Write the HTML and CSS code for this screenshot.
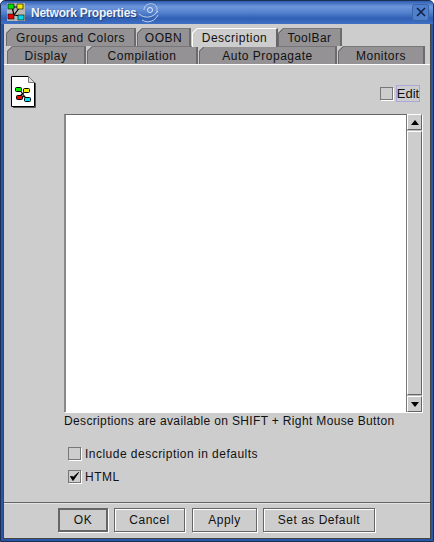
FILE: index.html
```html
<!DOCTYPE html>
<html lang="en">
<head>
<meta charset="utf-8">
<title>Network Properties</title>
<link rel="stylesheet" href="styles.css">
</head>
<body>
<div class="window">
  <header class="titlebar">
    <svg class="app-icon" width="18" height="18" viewBox="0 0 18 18">
      <rect width="18" height="18" fill="#b9b9b4"/>
      <path d="M5 4L13 4M5 4L7 12M13 4L7 12M7 12L13 13" stroke="#000" stroke-width="1.2" fill="none"/>
      <rect x="1" y="1" width="6" height="5" fill="#00e000" stroke="#000" stroke-width=".6"/>
      <rect x="10" y="1" width="6" height="5" fill="#f0e800" stroke="#000" stroke-width=".6"/>
      <rect x="1" y="11" width="6" height="5" fill="#e80000" stroke="#000" stroke-width=".6"/>
      <rect x="11" y="12" width="6" height="5" fill="#00d8e8" stroke="#000" stroke-width=".6"/>
    </svg>
    <span class="title">Network Properties</span>
    <svg class="swirl" width="22" height="24" viewBox="0 0 22 24">
      <g fill="none" stroke="#dfe8f6" stroke-width="1">
        <circle cx="12" cy="9" r="2.5"/>
        <path d="M6 9C6 4 11 2 15 3C19 4 20 9 18 12" opacity=".7"/>
        <path d="M1 13C7 18 15 17 20 10M4 19C10 23 17 20 20 14" opacity=".8"/>
      </g>
    </svg>
    <span class="close"><svg width="12" height="12" viewBox="0 0 12 12"><path d="M2 2L10 10M10 2L2 10" stroke="#10214a" stroke-width="1.6"/></svg></span>
  </header>
  <div class="client">
    <nav class="tabs">
      <div class="tab-row row-top">
        <div class="tab t-groups">Groups and Colors</div>
        <div class="tab t-oobn">OOBN</div>
        <div class="tab active t-desc">Description</div>
        <div class="tab t-tool">ToolBar</div>
      </div>
      <div class="tab-row row-bottom">
        <div class="tab t-display">Display</div>
        <div class="tab t-comp">Compilation</div>
        <div class="tab t-auto">Auto Propagate</div>
        <div class="tab t-mon">Monitors</div>
      </div>
    </nav>
    <main class="panel">
      <div class="panel-head">
        <svg class="doc-icon" width="25" height="32" viewBox="0 0 25 32">
          <path d="M.5.5H17.500L23.500 6.500V30.500H.5Z" fill="#fff" stroke="#000"/>
          <path d="M24.500 7V31.500H2" fill="none" stroke="#555"/>
          <path d="M17.500.5V6.500H23.500Z" fill="#ddd" stroke="#777"/>
          <path d="M8 13L14 21M17 13L9 20M10 20L17 22" stroke="#000" stroke-width="1.2"/>
          <rect x="4.500" y="11.500" width="6" height="4" rx="1" fill="#00f000" stroke="#000"/>
          <rect x="12.500" y="12.500" width="6" height="4" rx="1" fill="#f8f000" stroke="#000"/>
          <rect x="5.500" y="19.500" width="6" height="4" rx="1" fill="#f00000" stroke="#000"/>
          <rect x="13.500" y="21.500" width="6" height="4" rx="1" fill="#00e0f0" stroke="#000"/>
        </svg>
        <label class="edit"><span class="check"></span><span class="edit-label">Edit</span></label>
      </div>
      <div class="text-area">
        <div class="text-box"></div>
        <div class="scrollbar">
          <span class="arrow-btn"><span class="arrow up"></span></span>
          <span class="thumb"></span>
          <span class="arrow-btn"><span class="arrow down"></span></span>
        </div>
      </div>
      <p class="hint">Descriptions are available on SHIFT + Right Mouse Button</p>
      <div class="options">
        <label class="option"><span class="check"></span>Include description in defaults</label>
        <label class="option"><span class="check"><svg width="11" height="11" viewBox="0 0 11 11"><path d="M1.500 5.500L4 9.500L9.500 1.500L4.500 6Z" fill="#000" stroke="#000"/></svg></span>HTML</label>
      </div>
    </main>
    <footer class="buttons">
      <button class="btn btn-ok">OK</button>
      <button class="btn btn-cancel">Cancel</button>
      <button class="btn btn-apply">Apply</button>
      <button class="btn btn-default">Set as Default</button>
    </footer>
  </div>
</div>
</body>
</html>
```
FILE: styles.css
```css
* { box-sizing: border-box; }
html, body { margin: 0; padding: 0; }
body { width: 434px; height: 542px; overflow: hidden; background: #fff; font-family: "Liberation Sans", sans-serif; font-size: 12px; color: #111; }
.window { width: 434px; height: 542px; display: flex; flex-direction: column; background: #2a56a8; border: 1px solid #1b2f55; border-radius: 5px 5px 0 0; padding: 0 2px 2px 2px; }
.titlebar { flex: none; height: 23px; margin: 0 -2px; padding: 0 3px 0 6px; display: flex; align-items: center; background: linear-gradient(#2f5cb0 0, #6d97dc 25%, #4e7cca 55%, #305fb4 75%, #3f70c4 100%); color: #fff; border-radius: 4px 4px 0 0; }
.app-icon { flex: none; margin-top: -1px; }
.title { margin-left: 6px; font-weight: bold; font-size: 12px; letter-spacing: -.25px; text-shadow: 1px 1px 1px #1c3a78; color: #eef3fb; }
.swirl { margin-left: 1px; margin-top: 1px; }
.close { margin-left: auto; margin-right: 1px; width: 17px; height: 17px; margin-top: -1px; display: flex; align-items: center; justify-content: center; background: #5080cc; border: 1px solid #3b65aa; border-radius: 3px; }
.client { flex: 1; display: flex; flex-direction: column; min-height: 0; background: #cdcdcd; border: 1px solid #444; border-top: 0; }
.tabs { flex: none; padding: 4px 0 0 2px; height: 40px; display: flex; flex-direction: column; }
.tab-row { display: flex; height: 18px; }
.row-bottom { padding-left: 1px; }
.tab { height: 18px; display: flex; align-items: center; justify-content: center; background: linear-gradient(135deg, transparent 3.5px, #666 3.5px, #666 4.5px, #949295 4.5px) border-box; border: 1px solid #6b6b6b; border-bottom: 0; border-right-width: 2px; border-top-color: #777; color: #111; letter-spacing: .5px; flex: none; margin-right: 1px; clip-path: polygon(5px 0, 100% 0, 100% 100%, 0 100%, 0 5px); }
.tab.active { background: linear-gradient(135deg, transparent 3.5px, #fff 3.5px, #fff 4.5px, #cdcdcd 4.5px) border-box; border-color: #fff; border-right-color: #666; height: 19px; position: relative; z-index: 1; }
.t-groups { width: 130px; }
.t-oobn { width: 54px; }
.t-desc { width: 86px; margin-right: 0; }
.t-tool { width: 64px; }
.t-display { width: 79px; }
.t-comp { width: 111px; }
.t-auto { width: 138px; }
.t-mon { width: 87px; }
.panel { flex: 1; min-height: 0; border-top: 1px solid #fff; padding: 11px 0 0 60px; display: flex; flex-direction: column; position: relative; }
.panel-head { height: 38px; display: flex; align-items: flex-end; justify-content: flex-end; padding-right: 10px; padding-bottom: 12px; }
.doc-icon { position: absolute; left: 7px; top: 11px; }
.edit { display: flex; align-items: center; gap: 3px; }
.check { flex: none; width: 13px; height: 13px; background: #cdcdcd; border: 1px solid #777; box-shadow: 1px 1px 0 #fff; display: flex; align-items: center; justify-content: center; }
.edit-label { border: 1px solid #a9a8d8; height: 17px; width: 24px; font-size: 13px; display: flex; align-items: center; justify-content: center; }
.text-area { height: 298px; margin-right: 8px; display: flex; border-top: 1px solid #666; border-left: 2px solid #888; box-shadow: 1px 1px 0 #fff; background: #fff; }
.text-box { flex: 1; background: #fff; }
.scrollbar { width: 16px; background: #bdbdbd; display: flex; flex-direction: column; justify-content: space-between; gap: 1px; border-left: 1px solid #777; margin-top: -1px; }
.arrow-btn { height: 16px; flex: none; background: #cdcdcd; border: 1px solid #fff; border-right-color: #666; border-bottom-color: #666; display: flex; align-items: center; justify-content: center; }
.arrow { width: 0; height: 0; border-left: 4px solid transparent; border-right: 4px solid transparent; }
.arrow.up { border-bottom: 5px solid #000; }
.arrow.down { border-top: 5px solid #000; }
.thumb { flex: 1; background: #cdcdcd; border: 1px solid #fff; border-right-color: #666; border-bottom-color: #666; }
.hint { margin: 0; height: 18px; line-height: 18px; letter-spacing: .35px; white-space: nowrap; }
.options { margin-top: 17px; padding-left: 4px; display: flex; flex-direction: column; gap: 10px; }
.option { display: flex; align-items: center; gap: 4px; height: 13px; letter-spacing: .48px; }
.buttons { flex: none; height: 36px; border-top: 1px solid #666; box-shadow: inset 0 1px 0 #e4e4e4; display: flex; align-items: flex-start; padding: 5px 0 0 54px; }
.btn { font: inherit; letter-spacing: .5px; color: #111; height: 24px; background: #cdcdcd; border: 1px solid #666; box-shadow: 1px 1px 0 #fff, inset 1px 1px 0 #fff; padding: 0; }
.btn-ok { width: 50px; border: 2px solid #666; box-shadow: 1px 1px 0 #fff; }
.btn-cancel { width: 71px; margin-left: 6px; }
.btn-apply { width: 65px; margin-left: 7px; }
.btn-default { width: 112px; margin-left: 6px; }
```
